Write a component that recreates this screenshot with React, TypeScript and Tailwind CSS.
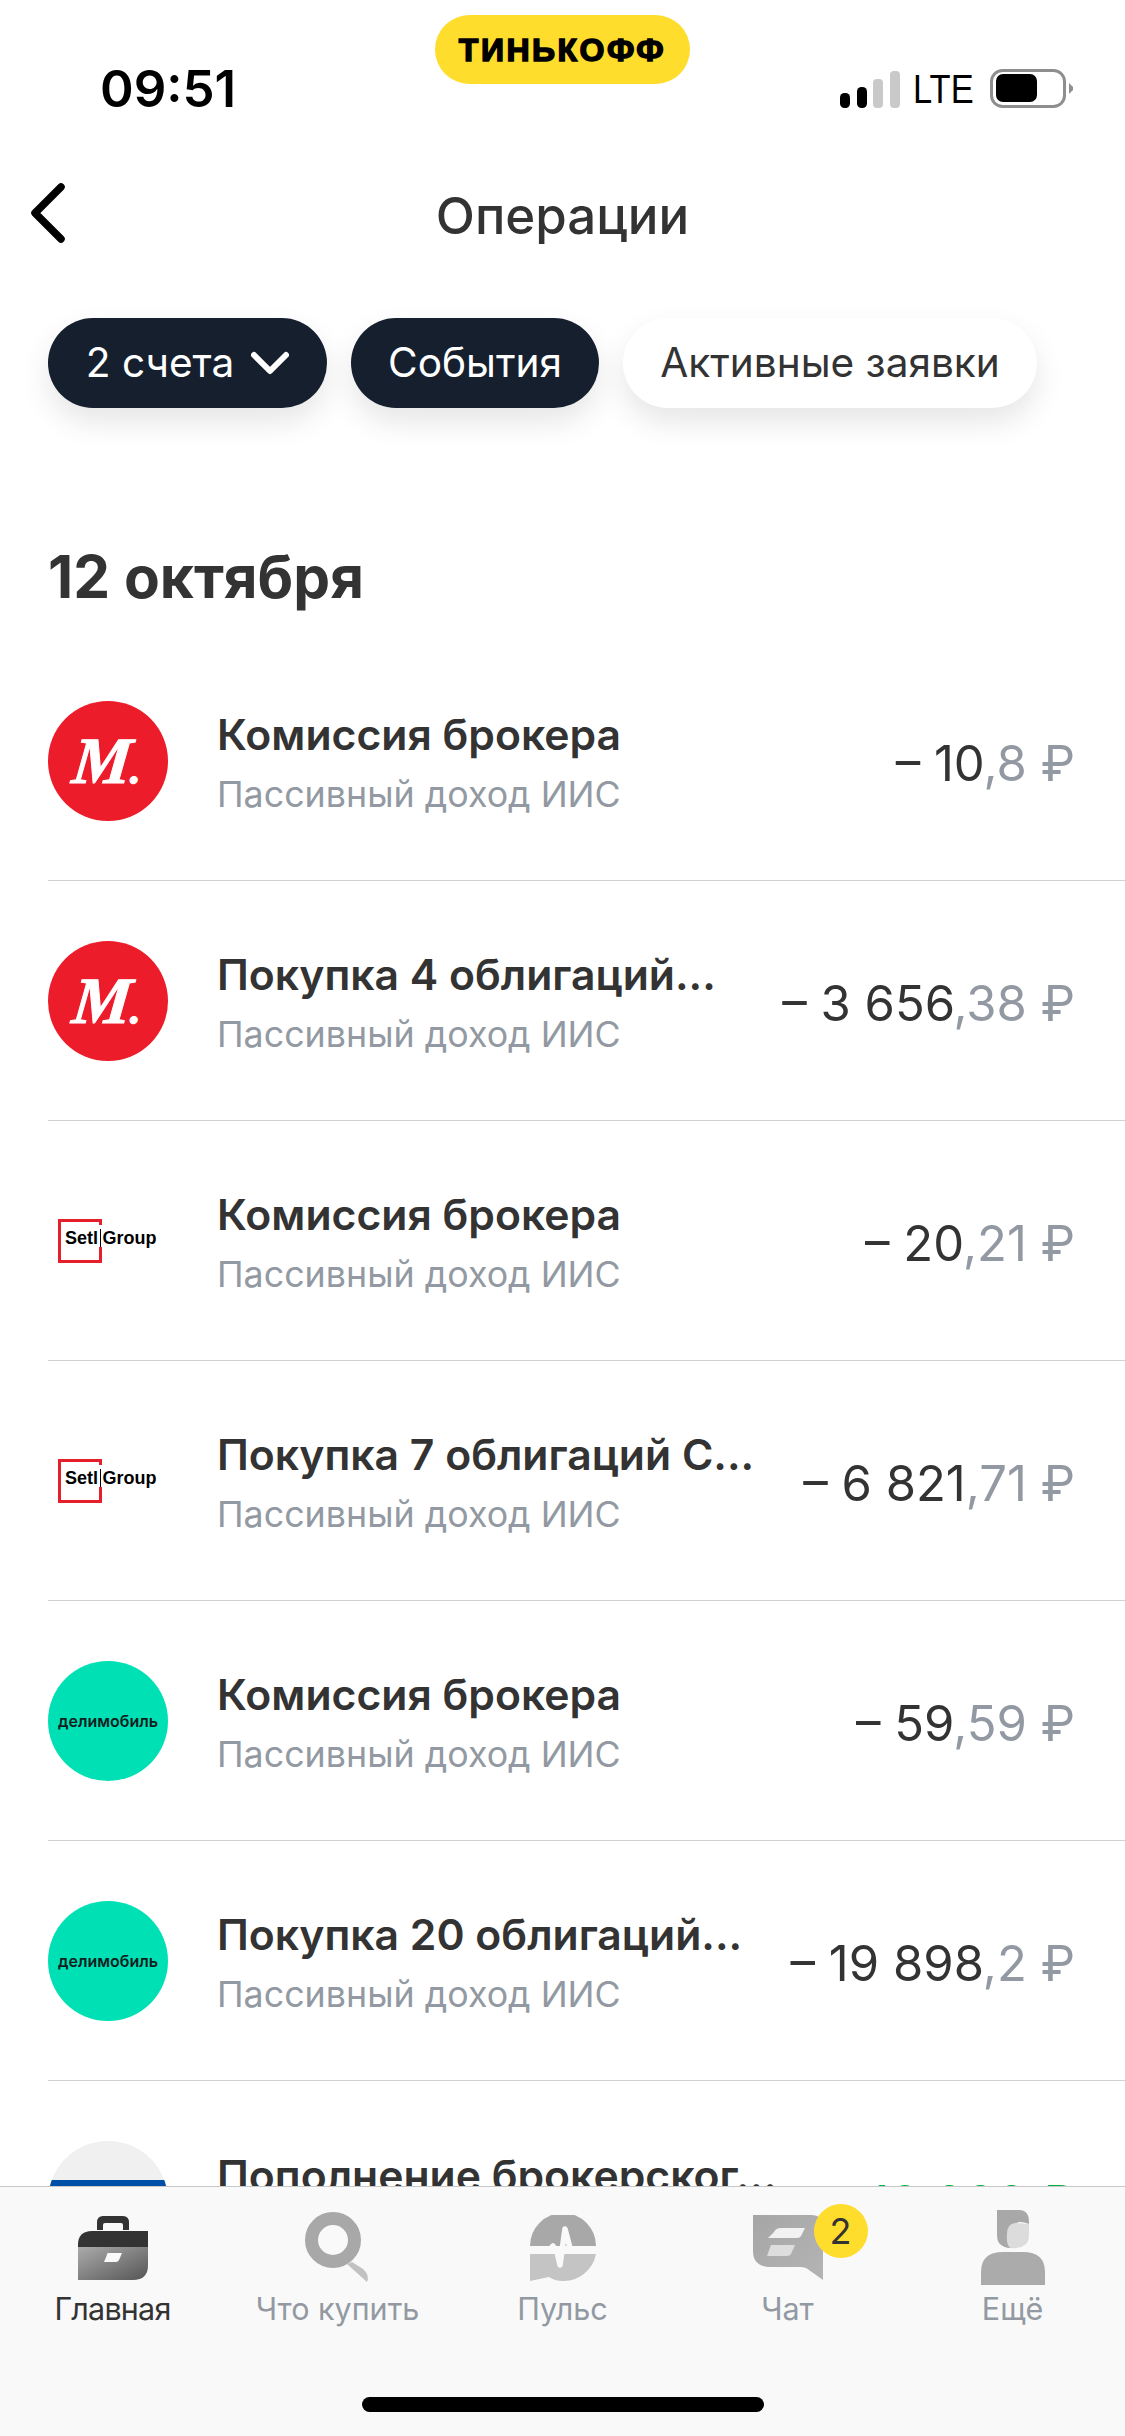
const sans = "font-['Inter','Noto_Sans',sans-serif]";

function MLogo() {
  return (
    <div className="w-[120px] h-[120px] rounded-full bg-[#ec1c2a] flex items-center justify-center shrink-0">
      <span className="font-['Liberation_Serif',serif] italic font-bold text-white text-[66px] leading-none -skew-x-6 [-webkit-text-stroke:1px_white]">
        М<span className="text-[44px]">.</span>
      </span>
    </div>
  );
}

function SetlLogo() {
  return (
    <div className="w-[120px] h-[120px] relative shrink-0">
      <svg className="absolute left-[10px] top-[38px]" width="44" height="44" viewBox="0 0 44 44" fill="none">
        <path d="M42.500 6V1.500H1.500V42.500H42.500V28" stroke="#e3202c" strokeWidth="3" />
      </svg>
      <div className="absolute left-[17px] top-[44px] flex items-center font-['Liberation_Sans',sans-serif] font-bold text-[18px] leading-[26px] text-black whitespace-nowrap">
        <span>Setl</span>
        <span className="w-[1.500px] h-[18px] bg-black mx-[1.500px]" />
        <span>Group</span>
      </div>
    </div>
  );
}

function DeliLogo() {
  return (
    <div className="w-[120px] h-[120px] rounded-full bg-[#00e0b5] flex items-center justify-center shrink-0">
      <span className={`${sans} font-semibold text-[#10201e] text-[16px] leading-none`}>делимобиль</span>
    </div>
  );
}

function BankLogo() {
  return (
    <div className="w-[120px] h-[120px] rounded-full bg-[#f0f0f0] overflow-hidden shrink-0 flex flex-col">
      <div className="h-[39px] shrink-0" />
      <div className="h-[40px] bg-[#0050a8]" />
    </div>
  );
}

function Row({ logo, title, whole, frac, color, last }: { logo: React.ReactNode; title: string; whole: string; frac: string; color?: string; last?: boolean }) {
  return (
    <div className={`ml-[48px] h-[240px] shrink-0 flex items-center pr-[50px] ${last ? "" : "border-b-[1.500px] border-[#cfd1d5]"}`}>
      {logo}
      <div className="ml-[49px] flex-1 min-w-0 pt-[6px]">
        <div className="text-[42.700px] leading-[48px] font-semibold text-[#333333] whitespace-nowrap">{title}</div>
        <div className="text-[35.800px] leading-[44px] mt-[13px] text-[#9299a2] whitespace-nowrap">{"Пассивный доход ИИС"}</div>
      </div>
      <div className={`text-[49px] leading-[60px] pt-[6px] whitespace-nowrap ${color ?? "text-[#333333]"}`}>
        {whole}
        <span className={color ?? "text-[#9299a2]"}>{frac}</span>
      </div>
    </div>
  );
}

function Briefcase() {
  return (
    <svg width="70" height="66" viewBox="0 0 70 66">
      <defs>
        <linearGradient id="bc" x1="0" y1="0" x2="1" y2="1">
          <stop offset="0" stopColor="#ababab" />
          <stop offset="1" stopColor="#555555" />
        </linearGradient>
      </defs>
      <path d="M19 15V7.500Q19 1 25 1H45Q51 1 51 7.500V15H45V10Q45 8 43 8H27Q25 8 25 10V15Z" fill="#333333" />
      <path d="M0 32V30Q0 16 14 16H70V32Z" fill="#333333" />
      <path d="M0 32H70V50Q70 65 55 65H0Z" fill="url(#bc)" />
      <path d="M30 38H44L41 45Q40 47 38 47H26L28.500 41Q29 38 30 38Z" fill="#f9f9f9" />
    </svg>
  );
}

function SearchIcon() {
  return (
    <svg width="66" height="72" viewBox="0 0 66 72">
      <path d="M47 50L58 57Q65 63 62 70L42 52Z" fill="#c2c2c2" />
      <circle cx="28" cy="28" r="21.500" fill="none" stroke="#a8a8a8" strokeWidth="13" />
    </svg>
  );
}

function PulseIcon() {
  return (
    <svg width="66" height="66" viewBox="0 0 66 66">
      <path d="M0 31A33 33 0 0 1 66 31Z" fill="#a8a8a8" />
      <path d="M0 39H66A33 33 0 0 1 33 66C28 66 24 65 19 62L0 66Z" fill="#c4c4c4" />
      <path d="M0 35H19L23 31L27 37L30 50L35 14L40 33L46 35H66" fill="none" stroke="#f9f9f9" strokeWidth="5.500" strokeLinejoin="round" />
    </svg>
  );
}

function ChatIcon() {
  return (
    <svg width="70" height="66" viewBox="0 0 70 66">
      <defs>
        <linearGradient id="ct" x1="0" y1="0" x2="1" y2="1">
          <stop offset="0" stopColor="#a6a6a6" />
          <stop offset="1" stopColor="#b4b4b4" />
        </linearGradient>
      </defs>
      <path d="M0 0H58Q70 0 70 12V65L56 55Q53 52 47 52H18Q0 52 0 36Z" fill="url(#ct)" />
      <path d="M21 17Q23 13 28 13H52L48 21Q47 23 44 23H15Z" fill="#f2f2f2" />
      <path d="M18 30H42L38 39Q37 41 34 41H14Z" fill="#dddddd" />
    </svg>
  );
}

function PersonIcon() {
  return (
    <svg width="64" height="76" viewBox="0 0 64 76">
      <path d="M16 0H38Q48 0 48 12V14Q38 10 34 14Q30 18 30 24V38Q22 38 18 33Q16 30 16 25Z" fill="#a8a8a8" />
      <path d="M48 14V25Q48 32 44 35Q38 39 30 38Q25 36 26 24Q26 14 34 13Z" fill="#dcdcdc" />
      <path d="M0 75V62Q0 42 22 42H42Q64 42 64 62V75Z" fill="#ababab" />
    </svg>
  );
}

function Tab({ icon, label, active, badge }: { icon: React.ReactNode; label: string; active?: boolean; badge?: boolean }) {
  return (
    <div className="w-[225px] flex flex-col items-center">
      <div className="h-[81px] flex items-center justify-center relative">
        {icon}
        {badge && (
          <div className="absolute left-[61px] -top-[3px] w-[54px] h-[54px] rounded-full bg-[#ffdd2d] flex items-center justify-center text-[36px] leading-none text-[#333333]">2</div>
        )}
      </div>
      <div className={`mt-[3px] text-[30.500px] leading-[36px] whitespace-nowrap ${active ? "text-[#333333] tracking-[-0.800px]" : "text-[#9299a2]"}`}>{label}</div>
    </div>
  );
}

export default function App() {
  return (
    <div className={`w-[1125px] h-[2436px] bg-white overflow-hidden flex flex-col ${sans}`}>
      <div className="h-[111px] shrink-0 flex items-start">
        <div className="w-[435px] pl-[100px] pt-[60px] text-[51px] leading-[58px] font-semibold text-black">09:51</div>
        <div className="mt-[15px] w-[255px] h-[69px] rounded-[35px] bg-[#ffdd2d] flex items-center justify-center font-['Liberation_Sans',sans-serif] font-bold text-[32px] leading-none tracking-[2.500px] text-black [-webkit-text-stroke:1.5px_black]">ТИНЬКОФФ</div>
        <div className="flex-1 pl-[150px] pt-[70px] flex items-center">
          <svg width="60" height="37" viewBox="0 0 60 37">
            <rect x="0" y="22" width="10" height="15" rx="4.500" fill="#000" />
            <rect x="17" y="16" width="10" height="21" rx="4.500" fill="#000" />
            <rect x="33" y="8" width="10" height="29" rx="4" fill="#c9c9c9" />
            <rect x="50" y="0" width="10" height="37" rx="4" fill="#c9c9c9" />
          </svg>
          <span className="ml-[13px] w-[59px] inline-block origin-left scale-x-[0.84] text-[41px] leading-[38px] text-black font-['Liberation_Sans',sans-serif]">LTE</span>
          <svg className="ml-[18px] -mt-[1px]" width="84" height="39" viewBox="0 0 84 39">
            <rect x="1.500" y="1.500" width="73" height="36" rx="11" fill="none" stroke="#8e8e8e" strokeWidth="3" />
            <rect x="6" y="5" width="41" height="28" rx="7" fill="#000" />
            <path d="M79 14L83 18V21L79 25Z" fill="#8e8e8e" />
          </svg>
        </div>
      </div>

      <div className="h-[207px] shrink-0 flex items-start justify-center relative">
        <svg className="absolute left-[29px] top-[72px]" width="36" height="60" viewBox="0 0 36 60" fill="none">
          <path d="M32 4L6 30L32 56" stroke="#000" strokeWidth="7.500" strokeLinecap="round" strokeLinejoin="round" />
        </svg>
        <span className="text-[51px] leading-[60px] font-medium text-[#333333] mt-[75px]">Операции</span>
      </div>

      <div className="h-[224px] shrink-0 flex items-start pl-[48px] gap-[24px] text-[40.600px] leading-[90px]">
        <div className="w-[279px] h-[90px] rounded-[45px] bg-[#151f2e] text-white flex items-center justify-center gap-[17px] shadow-[0_14px_30px_rgba(0,0,0,0.10)]">
          <span>2 счета</span>
          <svg width="38" height="24" viewBox="0 0 38 24" fill="none">
            <path d="M3 4L19 20L35 4" stroke="#fff" strokeWidth="6" strokeLinecap="round" strokeLinejoin="round" />
          </svg>
        </div>
        <div className="w-[248px] h-[90px] rounded-[45px] bg-[#151f2e] text-white flex items-center justify-center shadow-[0_14px_30px_rgba(0,0,0,0.10)]">События</div>
        <div className="w-[414px] h-[90px] rounded-[45px] bg-white text-[#333333] flex items-center justify-center shadow-[0_14px_30px_rgba(0,0,0,0.10)]">Активные заявки</div>
      </div>

      <div className="pl-[48px] h-[70px] shrink-0 text-[58.500px] leading-[70px] font-bold text-[#333333]">12 октября</div>

      <div className="flex-1 min-h-0 overflow-hidden mt-[29px] flex flex-col">
        <Row logo={<MLogo />} title="Комиссия брокера" whole="– 10" frac=",8 ₽" />
        <Row logo={<MLogo />} title="Покупка 4 облигаций..." whole="– 3 656" frac=",38 ₽" />
        <Row logo={<SetlLogo />} title="Комиссия брокера" whole="– 20" frac=",21 ₽" />
        <Row logo={<SetlLogo />} title="Покупка 7 облигаций С..." whole="– 6 821" frac=",71 ₽" />
        <Row logo={<DeliLogo />} title="Комиссия брокера" whole="– 59" frac=",59 ₽" />
        <Row logo={<DeliLogo />} title="Покупка 20 облигаций..." whole="– 19 898" frac=",2 ₽" />
        <Row logo={<BankLogo />} title="Пополнение брокерског..." whole="+ 10 000 ₽" frac="" color="text-[#00b140]" last />
      </div>

      <div className="h-[250px] shrink-0 bg-[#f9f9f9] border-t-[1.500px] border-[#c8c8c8] relative">
        <div className="flex pt-[20px]">
          <Tab icon={<Briefcase />} label="Главная" active />
          <Tab icon={<SearchIcon />} label="Что купить" />
          <Tab icon={<PulseIcon />} label="Пульс" />
          <Tab icon={<ChatIcon />} label="Чат" badge />
          <Tab icon={<PersonIcon />} label="Ещё" />
        </div>
        <div className="absolute left-[362px] top-[210px] w-[402px] h-[15px] rounded-full bg-black" />
      </div>
    </div>
  );
}
